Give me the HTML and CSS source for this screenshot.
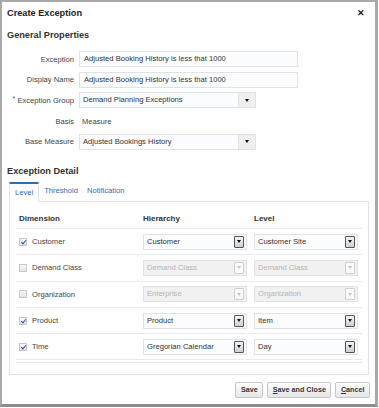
FILE: index.html
```html
<!DOCTYPE html>
<html lang="en">
<head>
    <meta charset="UTF-8">
    <meta name="viewport" content="width=device-width, initial-scale=1.0">
    <title>Create Exception</title>
    <link rel="stylesheet" href="styles.css">
</head>
<body>
    <div class="dialog">
        <!-- Header -->
        <div class="dialog-header">
            <div class="dialog-title">Create Exception</div>
            <span class="close-btn">&#x2715;</span>
        </div>

        <!-- General Properties -->
        <div class="section-title">General Properties</div>
        <div class="form">
            <div class="form-row">
                <label class="form-label">Exception</label>
                <div class="text-input">Adjusted Booking History is less that 1000</div>
            </div>
            <div class="form-row">
                <label class="form-label">Display Name</label>
                <div class="text-input">Adjusted Booking History is less that 1000</div>
            </div>
            <div class="form-row">
                <label class="form-label"><span class="required">*</span> Exception Group</label>
                <div class="select wide">
                    <span class="select-value">Demand Planning Exceptions</span>
                    <span class="select-btn light"><span class="arrow"></span></span>
                </div>
            </div>
            <div class="form-row">
                <label class="form-label">Basis</label>
                <div class="plain-value">Measure</div>
            </div>
            <div class="form-row">
                <label class="form-label">Base Measure</label>
                <div class="select wide">
                    <span class="select-value">Adjusted Bookings History</span>
                    <span class="select-btn light"><span class="arrow"></span></span>
                </div>
            </div>
        </div>

        <!-- Exception Detail -->
        <div class="section-title detail-title">Exception Detail</div>
        <div class="tabs">
            <div class="tab active">Level</div>
            <div class="tab">Threshold</div>
            <div class="tab">Notification</div>
        </div>
        <div class="tab-panel">
            <div class="level-table">
                <div class="table-row table-head">
                    <div>Dimension</div>
                    <div>Hierarchy</div>
                    <div>Level</div>
                </div>

                <div class="table-row">
                    <div class="dim"><span class="checkbox checked"></span>Customer</div>
                    <div class="select"><span class="select-value">Customer</span><span class="select-btn"><span class="arrow"></span></span></div>
                    <div class="select"><span class="select-value">Customer Site</span><span class="select-btn"><span class="arrow"></span></span></div>
                </div>
                <div class="table-row">
                    <div class="dim"><span class="checkbox"></span>Demand Class</div>
                    <div class="select disabled"><span class="select-value">Demand Class</span><span class="select-btn"><span class="arrow"></span></span></div>
                    <div class="select disabled"><span class="select-value">Demand Class</span><span class="select-btn"><span class="arrow"></span></span></div>
                </div>
                <div class="table-row">
                    <div class="dim"><span class="checkbox"></span>Organization</div>
                    <div class="select disabled"><span class="select-value">Enterprise</span><span class="select-btn"><span class="arrow"></span></span></div>
                    <div class="select disabled"><span class="select-value">Organization</span><span class="select-btn"><span class="arrow"></span></span></div>
                </div>
                <div class="table-row">
                    <div class="dim"><span class="checkbox checked"></span>Product</div>
                    <div class="select"><span class="select-value">Product</span><span class="select-btn"><span class="arrow"></span></span></div>
                    <div class="select"><span class="select-value">Item</span><span class="select-btn"><span class="arrow"></span></span></div>
                </div>
                <div class="table-row">
                    <div class="dim"><span class="checkbox checked"></span>Time</div>
                    <div class="select"><span class="select-value">Gregorian Calendar</span><span class="select-btn"><span class="arrow"></span></span></div>
                    <div class="select"><span class="select-value">Day</span><span class="select-btn"><span class="arrow"></span></span></div>
                </div>
                <div class="table-end"></div>
            </div>
        </div>

        <!-- Footer -->
        <div class="dialog-footer">
            <button class="btn">Save</button>
            <button class="btn"><u>S</u>ave and Close</button>
            <button class="btn"><u>C</u>ancel</button>
        </div>
    </div>
</body>
</html>
```

FILE: styles.css
```css
* {
    margin: 0;
    padding: 0;
    box-sizing: border-box;
}

body {
    font-family: 'Liberation Sans', Arial, sans-serif;
    font-size: 7.6px;
    color: #333;
    background: #fff;
}

.dialog {
    width: 378px;
    height: 407px;
    border: 2px solid #a9a9a9;
    border-right-width: 3px;
    border-bottom-width: 3px;
    border-bottom-color: #8c8c8c;
    padding: 0 6px 0 5px;
    background: #fff;
}

.dialog-header {
    display: flex;
    justify-content: space-between;
    align-items: center;
    height: 21px;
}

.dialog-title {
    font-size: 9.2px;
    font-weight: bold;
    color: #222;
}

.close-btn {
    font-size: 9px;
    font-weight: bold;
    color: #222;
    margin-right: 4px;
}

.section-title {
    font-size: 9.2px;
    font-weight: bold;
    color: #333;
    line-height: 14px;
    margin-top: 5px;
}

.detail-title {
    margin-top: 12px;
}

.form {
    margin-top: 7px;
}

.form-row {
    display: flex;
    align-items: center;
    gap: 5px;
    height: 20.6px;
}

.form-label {
    width: 67px;
    text-align: right;
    color: #444;
    white-space: nowrap;
}

.required {
    color: #2f6db5;
    position: relative;
    top: -2px;
}

.text-input {
    width: 219px;
    height: 16px;
    line-height: 14px;
    padding: 0 4px;
    border: 1px solid #dfe3e7;
    background: #fbfcfd;
    color: #333;
}

.plain-value {
    padding-left: 3px;
    color: #444;
}

.select {
    display: flex;
    height: 16px;
    width: 104px;
    border: 1px solid #dfe3e7;
    background: #fbfcfd;
}

.select.wide {
    width: 177px;
}

.select-value {
    flex: 1;
    line-height: 14px;
    padding-left: 3px;
    white-space: nowrap;
    overflow: hidden;
}

.select-btn {
    width: 10px;
    margin: 1px 2px 1px 1px;
    display: flex;
    align-items: center;
    justify-content: center;
    border: 1px solid #555;
    border-radius: 1px;
    background: linear-gradient(#f4f4f4, #cfcfcf);
}

.select-btn.light {
    width: 17px;
    margin: 0;
    border: none;
    border-left: 1px solid #e2e2e2;
    background: #efefef;
}

.arrow {
    width: 0;
    height: 0;
    border-left: 2.5px solid transparent;
    border-right: 2.5px solid transparent;
    border-top: 3px solid #111;
}

.select.disabled {
    background: #f1f1f1;
    border-color: #e2e2e2;
    color: #b4b4b4;
}

.select.disabled .select-btn {
    border-color: #d0d0d0;
    background: #fafafa;
}

.select.disabled .arrow {
    border-top-color: #c2c2c2;
}

.tabs {
    display: flex;
    align-items: flex-end;
    height: 19px;
    margin-top: 4px;
    margin-left: 2px;
}

.tab {
    height: 19px;
    line-height: 17px;
    padding: 0 5px;
    color: #2f6db5;
}

.tab.active {
    border-top: 2px solid #2f6db5;
    border-left: 1px solid #dde3e8;
    border-right: 1px solid #dde3e8;
    background: #fff;
    margin-bottom: -1px;
    height: 20px;
    position: relative;
    padding: 0 5px;
}

.tab:nth-child(3) {
    padding-left: 4px;
}

.tab-panel {
    margin-left: 2px;
    width: 360px;
    height: 174px;
    border: 1px solid #dde3e8;
    padding: 7px 6px 0 6px;
}

.table-row {
    display: grid;
    grid-template-columns: 127px 111px 108px;
    align-items: center;
    height: 26.3px;
    border-bottom: 1px solid #e7ebee;
}

.table-head {
    height: 20px;
    font-size: 8px;
    font-weight: bold;
    color: #333;
    padding-left: 3px;
    grid-template-columns: 124px 111px 108px;
}

.dim {
    display: flex;
    align-items: center;
    padding-left: 3px;
    color: #444;
}

.checkbox {
    width: 8px;
    height: 8px;
    margin-right: 5px;
    border: 1px solid #c9c9c9;
    background: linear-gradient(#f8f8f8, #e4e4e4);
    position: relative;
}

.checkbox.checked::after {
    content: "";
    position: absolute;
    left: 2px;
    top: 0;
    width: 2px;
    height: 4px;
    border-right: 1.5px solid #3356a8;
    border-bottom: 1.5px solid #3356a8;
    transform: rotate(40deg);
}

.table-end {
    height: 3px;
    border-bottom: 1px solid #e7ebee;
}

.dialog-footer {
    display: flex;
    justify-content: flex-end;
    gap: 4px;
    margin-top: 7px;
    width: 363px;
}

.btn {
    height: 16px;
    padding: 0 4.5px;
    font-family: 'Liberation Sans', Arial, sans-serif;
    font-size: 7.2px;
    font-weight: bold;
    color: #333;
    border: 1px solid #c6c6c6;
    border-radius: 2px;
    background: linear-gradient(#ffffff, #e6e6e6);
}
```
